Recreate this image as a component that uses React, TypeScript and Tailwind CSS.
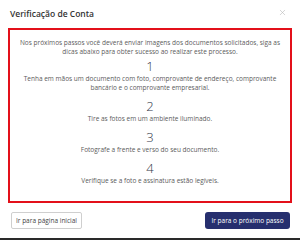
import { X } from "lucide-react";

const steps = [
  {
    n: "1",
    text: "Tenha em mãos um documento com foto, comprovante de endereço, comprovante bancário e o comprovante empresarial.",
  },
  { n: "2", text: "Tire as fotos em um ambiente iluminado." },
  { n: "3", text: "Fotografe a frente e verso do seu documento." },
  { n: "4", text: "Verifique se a foto e assinatura estão legíveis." },
];

export default function App() {
  return (
    <div
      className="flex h-[240px] w-[300px] flex-col border-b-2 border-[#2a2a2a] bg-white"
      style={{ fontFamily: '"Open Sans", "Liberation Sans", sans-serif' }}
    >
      {/* header */}
      <div className="flex h-[28px] items-center justify-between pl-[10px] pr-[13px]">
        <h2 className="text-[8.5px] font-semibold text-[#333]">Verificação de Conta</h2>
        <button className="-mt-[4px] text-[#b5b5b5]">
          <X size={9} strokeWidth={1.5} />
        </button>
      </div>

      {/* body */}
      <div className="mx-[8px] flex h-[175px] flex-col items-center border-2 border-[#e3101a] px-[6px] pt-[8px] text-center">
        <p className="text-[6.5px] leading-[9px] text-[#5b5b5b]">
          Nos próximos passos você deverá enviar imagens dos documentos solicitados, siga as dicas abaixo
          para obter sucesso ao realizar este processo.
        </p>
        <div className="mt-[3px] flex flex-col gap-[7px]">
          {steps.map((s) => (
            <div key={s.n} className="flex flex-col items-center">
              <span className="text-[13px] font-light leading-[14px] text-[#33374a]">{s.n}</span>
              <p className="mt-[1px] text-[6.5px] leading-[9px] text-[#5b5b5b]">{s.text}</p>
            </div>
          ))}
        </div>
      </div>

      {/* footer */}
      <div className="mt-[9px] flex items-center justify-between pl-[11px] pr-[10px]">
        <button className="h-[17px] w-[71px] rounded-[2px] border border-[#cfcfcf] bg-white text-[6.5px] text-[#444]">
          Ir para página inicial
        </button>
        <button className="h-[17px] w-[85px] rounded-[3px] bg-[#262f6e] text-[6.5px] text-white">
          Ir para o próximo passo
        </button>
      </div>
    </div>
  );
}
